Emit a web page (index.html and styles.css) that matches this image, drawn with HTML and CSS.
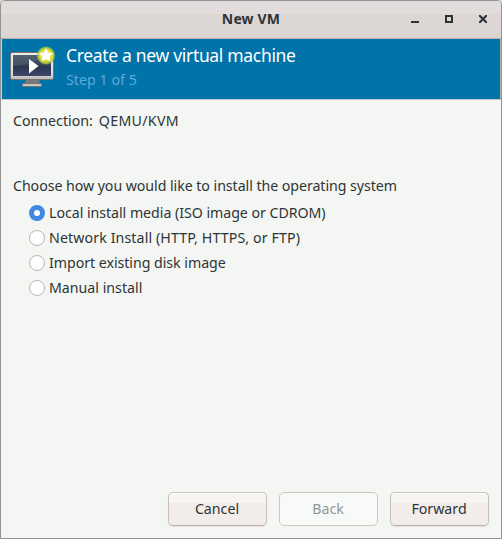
FILE: index.html
```html
<!DOCTYPE html>
<html lang="en">
<head>
<meta charset="utf-8">
<title>New VM</title>
<link rel="stylesheet" href="styles.css">
</head>
<body>
<div class="window">
  <header class="titlebar">
    <h1 class="window-title">New VM</h1>
    <div class="controls">
      <svg width="8" height="8" viewBox="0 0 8 8"><path d="M0 6h8v2H0z"/></svg>
      <svg width="8" height="8" viewBox="0 0 8 8"><path fill-rule="evenodd" d="M0 0h8v8H0zM2 2v4h4V2z"/></svg>
      <svg width="8" height="8" viewBox="0 0 8 8"><path d="M0 0h1.500L4 2.500 6.500 0H8v1.500L5.500 4 8 6.500V8H6.500L4 5.500 1.500 8H0V6.500L2.500 4 0 1.500z"/></svg>
    </div>
  </header>
  <section class="banner">
    <svg class="vm-icon" width="48" height="44" viewBox="0 0 48 44">
      <defs>
        <linearGradient id="screen" x1="0" y1="0" x2="0" y2="1"><stop offset="0" stop-color="#485a68"/><stop offset=".5" stop-color="#35435a"/><stop offset=".55" stop-color="#2b3650"/><stop offset="1" stop-color="#40466a"/></linearGradient>
        <linearGradient id="frame" x1="0" y1="0" x2="0" y2="1"><stop offset="0" stop-color="#eeeeec"/><stop offset=".8" stop-color="#dcdce0"/><stop offset="1" stop-color="#b8b8bc"/></linearGradient>
        <radialGradient id="glow"><stop offset="0" stop-color="#f4f03a"/><stop offset=".6" stop-color="#e2e52c"/><stop offset=".85" stop-color="#b4cc3c" stop-opacity=".8"/><stop offset="1" stop-color="#8abb50" stop-opacity=".1"/></radialGradient>
      </defs>
      <path d="M18 33h13l1 5H17z" fill="#77797a"/>
      <rect x="14.500" y="37.500" width="19" height="3" rx="1" fill="#c5c5c2" stroke="#76716c"/>
      <rect x="2.500" y="6.500" width="43" height="27" rx="1.500" fill="url(#frame)" stroke="#77706c"/>
      <rect x="5" y="9" width="38" height="21" fill="url(#screen)"/>
      <path d="M5 9h33L24 17 5 20z" fill="#5b6b75" opacity=".4"/>
      <path d="M21 13l9.500 7-9.500 7.500z" fill="#fff"/>
      <circle cx="38" cy="9.500" r="9.500" fill="url(#glow)"/>
      <path d="M38 2l2.200 4.500 5 .6-3.700 3.500 1 5-4.500-2.500-4.500 2.500 1-5-3.700-3.500 5-.6z" fill="#fff"/>
    </svg>
    <div class="heading">
      <h2 class="banner-title">Create a new virtual machine</h2>
      <p class="step">Step 1 of 5</p>
    </div>
  </section>
  <main class="content">
    <div class="connection"><span class="connection-label">Connection:</span><span class="connection-name">QEMU/KVM</span></div>
    <p class="prompt">Choose how you would like to install the operating system</p>
    <div class="options">
      <label class="option"><input type="radio" name="source" checked><span class="local">Local install media (ISO image or CDROM)</span></label>
      <label class="option"><input type="radio" name="source"><span class="network">Network Install (HTTP, HTTPS, or FTP)</span></label>
      <label class="option"><input type="radio" name="source"><span class="import">Import existing disk image</span></label>
      <label class="option"><input type="radio" name="source"><span class="manual">Manual install</span></label>
    </div>
  </main>
  <footer class="actions">
    <button>Cancel</button>
    <button disabled>Back</button>
    <button>Forward</button>
  </footer>
</div>
</body>
</html>
```
FILE: styles.css
```css
* { box-sizing: border-box; }
body { margin: 0; background: #dad7d3; overflow: hidden; }
h1, h2, p { margin: 0; font-weight: normal; }
.window {
  width: 502px; height: 539px;
  display: flex; flex-direction: column;
  border: 1px solid #929291;
  border-radius: 5px 5px 0 0;
  background: #f4f6f3;
  color: #2e3436;
  font: 14.2px/20px "Noto Sans", sans-serif;
  white-space: nowrap;
}
.titlebar {
  height: 38px; flex: none;
  display: grid; grid-template-columns: 1fr auto 1fr; align-items: center;
  padding-bottom: 1px;
  border-bottom: 1px solid #b8b2ac;
  border-radius: 4px 4px 0 0;
  background: linear-gradient(#e3dcdc 0 13px, #dcd6d5 13px 35px, #d5cfce);
}
.window-title { grid-column: 2; font-size: 14px; font-weight: bold; line-height: 20px; letter-spacing: .15px; }
.controls { display: flex; justify-content: flex-end; gap: 26px; padding-right: 14px; fill: #2e3436; }
.banner {
  height: 61px; flex: none;
  display: flex;
  padding: 5px 0 0 6px;
  border-bottom: 1px solid #c4c8ca;
  border-right: 1px solid #b8b2ac;
  border-left: 1px solid #d5d1ce;
  background: #0073a9;
}
.vm-icon { margin-top: 2px; }
.heading { padding: 0 0 0 10px; color: #fff; }
.banner-title { margin-top: -1px; font-size: 17.5px; line-height: 24px; letter-spacing: -.32px; }
.step { margin-top: 3px; line-height: 20px; color: #5ca9dc; letter-spacing: .05px; }
.content { flex: 1; padding: 11px 12px 0; }
.connection { display: flex; gap: 6px; height: 65px; }
.connection-name { letter-spacing: .3px; }
.prompt { letter-spacing: -.055px; }
.options { padding: 4px 0 0 16px; }
.option { height: 25px; display: flex; align-items: center; gap: 4px; }
.local, .import { letter-spacing: -.04px; }
.network { letter-spacing: .11px; }
.option input {
  appearance: none; margin: 0; width: 16px; height: 16px; flex: none;
  border: 1px solid #bdb4b0; border-radius: 50%; background: #fff;
}
.option input:checked { border: 5px solid #3f89e1; }
.actions { display: flex; justify-content: flex-end; gap: 12px; padding: 0 12px 12px; }
button {
  width: 99px; height: 34px; padding: 0 1px 0 0;
  border: 1px solid #c9c0bb; border-bottom-color: #b7aeaa; border-radius: 5px;
  background: linear-gradient(#fff 0 1px, #f7f5f3 1px 10px, #f2edeb 10px);
  color: #2e3436; font: inherit;
  box-shadow: 0 1px 1px #e3e5e2;
}
button:disabled { background: #f8faf7; border-color: #cec6c2; color: #8f9697; box-shadow: none; }
```
